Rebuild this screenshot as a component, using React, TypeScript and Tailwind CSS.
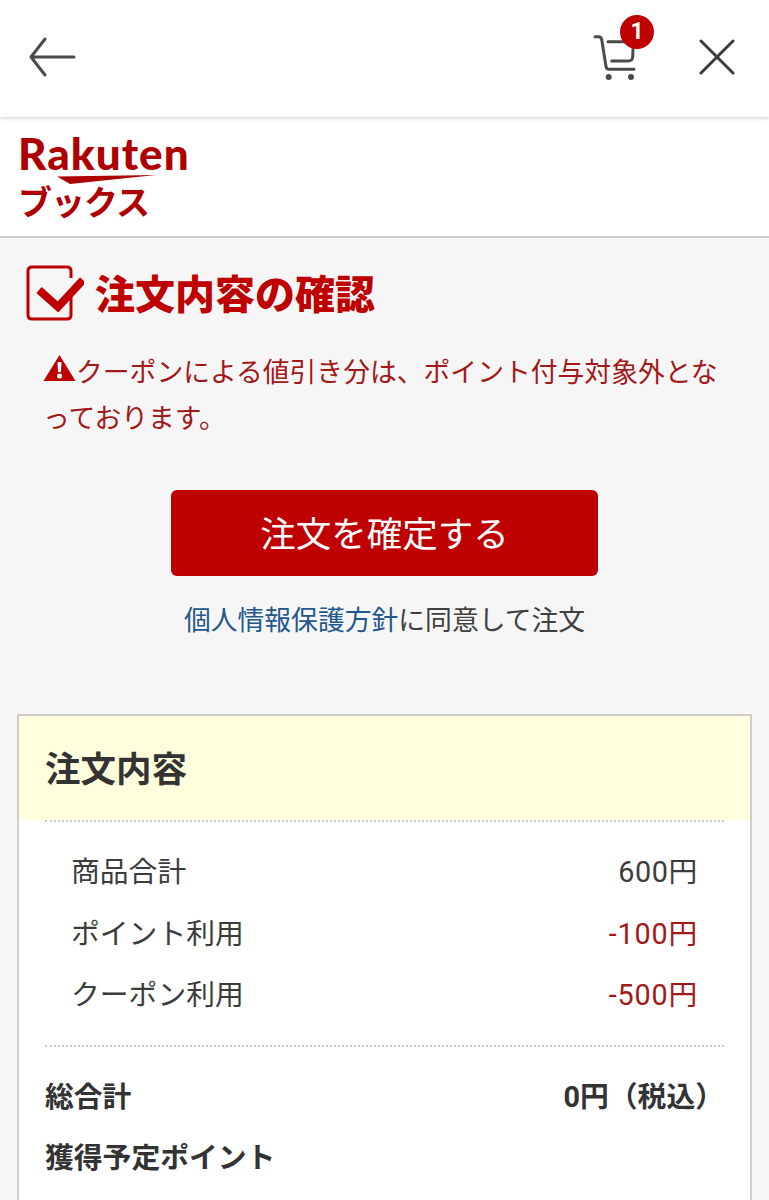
export default function App() {
  const font = { fontFamily: 'Roboto, "Noto Sans CJK JP", "Noto Sans", sans-serif' }

  return (
    <div style={font} className="h-[1200px] w-[769px] overflow-hidden bg-[#f6f6f7] text-[#333333]">
      {/* top bar */}
      <header className="relative z-10 flex h-[117px] items-center justify-between bg-white pl-[28px] pr-[34px] shadow-[0_1px_4px_rgba(0,0,0,0.2)]">
        <svg width="48" height="40" viewBox="0 0 48 40" fill="none" stroke="#4a4a4a" strokeWidth="3" className="mb-[4px]">
          <path d="M17 2 L3 20 L17 38 M3 20 H46" strokeLinecap="round" strokeLinejoin="round" />
        </svg>
        <div className="flex items-center gap-[60px]">
          <div className="relative h-[50px] w-[46px]">
            <svg width="46" height="48" viewBox="0 0 46 48" fill="none" stroke="#4a4a4a" strokeWidth="3">
              <path d="M2 2.7 H5.5 Q8.2 2.7 8.7 5.5 L13 32.5 Q13.5 35.3 16 35.3 H41" strokeLinecap="round" />
              <path d="M15 7.7 H36 M18.7 27 H35 Q39.5 27 39.7 23 L40 15" strokeLinecap="round" />
              <circle cx="15.7" cy="43" r="3" fill="#4a4a4a" stroke="none" />
              <circle cx="38" cy="43" r="3" fill="#4a4a4a" stroke="none" />
            </svg>
            <span className="absolute right-[-15px] top-[-19px] flex h-[34px] w-[34px] items-center justify-center rounded-full bg-[#bf0000] text-[23px] font-bold leading-none text-white">
              1
            </span>
          </div>
          <svg width="36" height="36" viewBox="0 0 36 36" fill="none" stroke="#3c3c3c" strokeWidth="3" className="mb-[3px]">
            <path d="M2 2 L34 34 M34 2 L2 34" strokeLinecap="round" />
          </svg>
        </div>
      </header>

      {/* logo */}
      <div className="h-[121px] border-b-2 border-[#cccccc] bg-white pl-[18px] pt-[9px]">
        <div className="relative h-[98px] w-[180px] text-[#ae0000]">
          <div style={{ fontFamily: '"Lato", sans-serif' }} className="text-[44px] font-black leading-[54px] tracking-[1px]">
            Rakuten
          </div>
          <svg width="99" height="9" viewBox="0 0 99 9" className="absolute left-[39px] top-[49px]">
            <path d="M0 1.5 L99 0 L13 9 Z" fill="#ae0000" />
          </svg>
          <div className="pt-[1px] text-[34px] font-bold leading-[44px] tracking-[-1px]">ブックス</div>
        </div>
      </div>

      {/* title */}
      <div className="flex items-center gap-[14px] pl-[26px] pt-[27px]">
        <svg width="58" height="56" viewBox="0 0 58 56" fill="none" className="mr-[-3px]">
          <path d="M45 27 V50 Q45 54 41 54 H6 Q2 54 2 50 V6 Q2 2 6 2 H41 Q45 2 45 6 V13" stroke="#bf0000" strokeWidth="3" />
          <path d="M13 25 L32 42 L57 15" stroke="#bf0000" strokeWidth="8" fill="none" />
        </svg>
        <h1 className="pt-[6px] text-[40px] font-black leading-[50px] text-[#bf0000]">注文内容の確認</h1>
      </div>

      {/* warning */}
      <p className="mt-[29px] pl-[43px] pr-[40px] text-[26.8px] leading-[46px] text-[#a31818]">
        <svg width="33" height="28" viewBox="0 0 33 28" className="mb-[8px] inline-block -translate-y-[3px]">
          <path d="M16.5 1 L32.5 27 H0.5 Z" fill="#bf0000" />
          <path d="M14.5 8 H18.5 L18 18 H15 Z" fill="white" />
          <circle cx="16.5" cy="22" r="2.5" fill="white" />
        </svg>
        クーポンによる値引き分は、ポイント付与対象外となっております。
      </p>

      {/* confirm */}
      <div className="mt-[48px] flex flex-col items-center">
        <button className="flex h-[86px] w-[427px] items-center justify-center rounded-[6px] bg-[#bf0000] pt-[5px] text-[35.5px] text-white">
          注文を確定する
        </button>
        <p className="mt-[22px] text-[26.8px] leading-[46px] text-[#404040]">
          <span className="text-[#23588f]">個人情報保護方針</span>に同意して注文
        </p>
      </div>

      {/* order */}
      <section className="mx-[17px] mt-[70px] border-2 border-b-0 border-[#cfcfc9] bg-white pb-[40px]">
        <div className="h-[104px] bg-[#ffffdd] pl-[26px] pt-[28px]">
          <h2 className="text-[35.5px] font-bold leading-[52px] text-[#333333]">注文内容</h2>
        </div>
        <div className="mx-[26px] border-t-2 border-dotted border-[#c8c8c8]" />
        <dl className="mx-[26px] border-b-2 border-dotted border-[#c8c8c8] px-[26px] pb-[18px] pt-[20px] text-[28.8px] leading-[61.5px] text-[#3c3c3c]">
          <div className="flex justify-between">
            <dt>商品合計</dt>
            <dd className="tracking-[0.6px]">600円</dd>
          </div>
          <div className="flex justify-between">
            <dt>ポイント利用</dt>
            <dd className="tracking-[0.8px] text-[#a31818]">-100円</dd>
          </div>
          <div className="flex justify-between">
            <dt>クーポン利用</dt>
            <dd className="tracking-[0.8px] text-[#a31818]">-500円</dd>
          </div>
        </dl>
        <div className="mx-[26px] pt-[20px] text-[28.8px] font-bold leading-[61.5px] text-[#333333]">
          <div className="flex justify-between">
            <span>総合計</span>
            <span>0円（税込）</span>
          </div>
          <div>獲得予定ポイント</div>
        </div>
      </section>
    </div>
  )
}
